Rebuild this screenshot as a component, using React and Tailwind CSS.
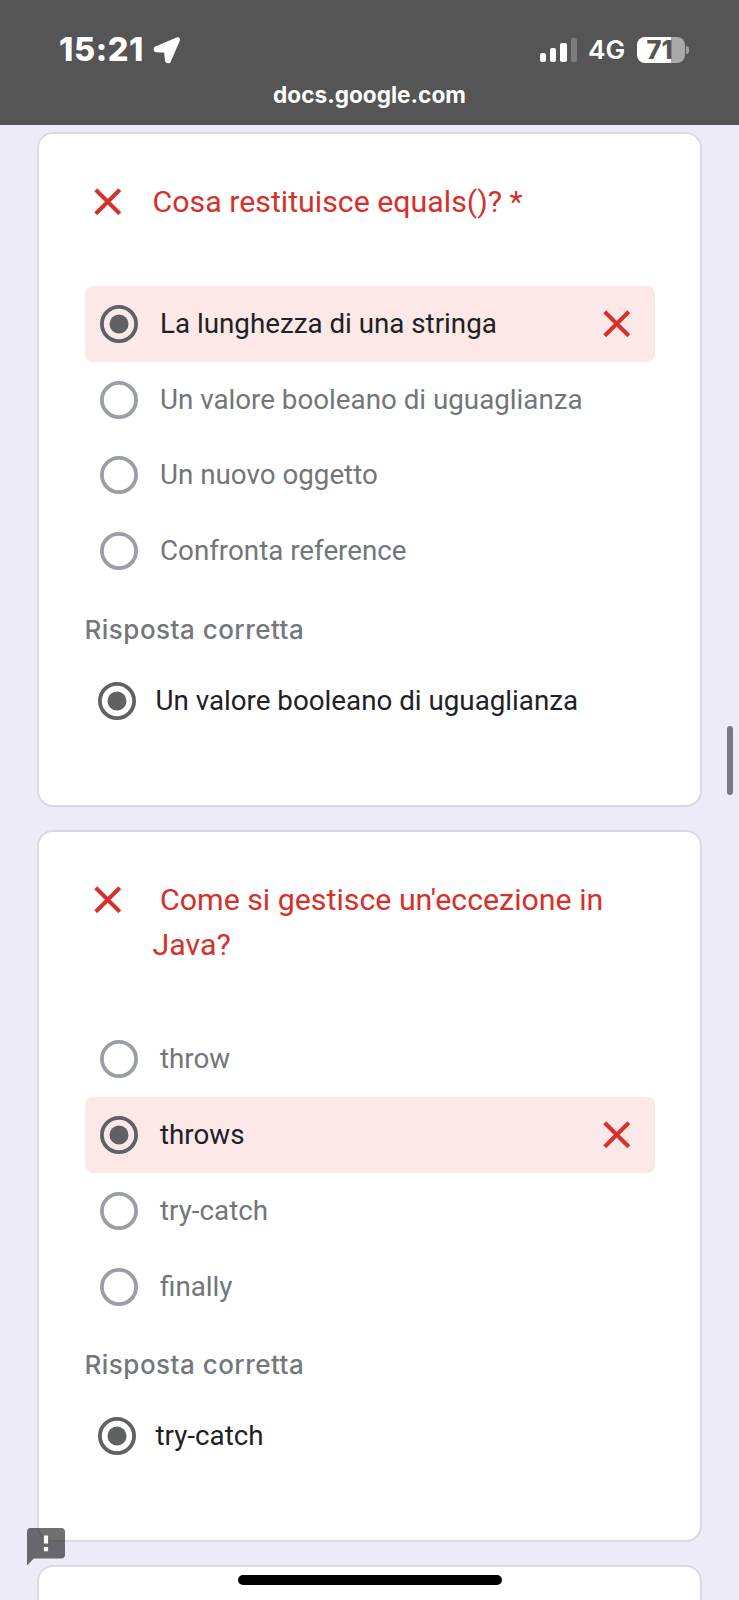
const questions = [
  {
    title: "Cosa restituisce equals()? *",
    head: "h-[107px]",
    card: "h-[675px]",
    options: [
      "La lunghezza di una stringa",
      "Un valore booleano di uguaglianza",
      "Un nuovo oggetto",
      "Confronta reference",
    ],
    selected: 0,
    correct: "Un valore booleano di uguaglianza",
  },
  {
    title: " Come si gestisce un'eccezione in Java?",
    head: "h-[144.3px]",
    card: "h-[712px]",
    options: ["throw", "throws", "try-catch", "finally"],
    selected: 1,
    correct: "try-catch",
  },
];

function CrossIcon() {
  return (
    <svg viewBox="0 0 24 24" className="size-[45.5px] shrink-0" fill="#d6302a" stroke="#d6302a" strokeWidth="0.2">
      <path d="M19 6.41 17.59 5 12 10.59 6.41 5 5 6.41 10.59 12 5 17.59 6.41 19 12 13.41 17.59 19 19 17.59 13.41 12z" />
    </svg>
  );
}

function Radio({ checked }) {
  const color = checked ? "#5f6165" : "#9a9fa5";
  return (
    <svg viewBox="0 0 38 38" className="size-[38px] shrink-0">
      <circle cx="19" cy="19" r="17.1" fill="none" stroke={color} strokeWidth="3.8" />
      {checked && <circle cx="19" cy="19" r="9.5" fill={color} />}
    </svg>
  );
}

function Option({ label, selected }) {
  return (
    <div
      className={
        "flex h-[75.8px] items-center rounded-lg px-[15px] " + (selected ? "bg-[#fbe8e7]" : "")
      }
    >
      <Radio checked={selected} />
      <span
        className={
          "ml-[22.5px] flex-1 whitespace-nowrap text-[27.75px] leading-[42px] " +
          (selected ? "text-[#202124]" : "text-[#72767a]")
        }
      >
        {label}
      </span>
      {selected && <CrossIcon />}
    </div>
  );
}

function Question({ q }) {
  return (
    <section
      className={
        "shrink-0 rounded-2xl border-2 border-[#dad8e2] bg-white pl-[45.5px] pr-[45.5px] pt-[45px] " +
        q.card
      }
    >
      <div className={"flex " + q.head}>
        <CrossIcon />
        <h2 className="ml-[22.5px] flex-1 whitespace-pre-wrap text-[30.32px] leading-[45px] text-[#d6302a]">
          {q.title}
        </h2>
      </div>
      {q.options.map((o, i) => (
        <Option key={o} label={o} selected={i === q.selected} />
      ))}
      <p className="mt-[20.5px] font-[Inter,sans-serif] text-[26px] font-medium leading-10 tracking-[0.48px] text-[#74777b]">
        Risposta corretta
      </p>
      <div className="mt-[13.5px] flex h-[76px] items-center pl-[13px]">
        <Radio checked />
        <span className="ml-5 whitespace-nowrap text-[27.75px] leading-[42px] text-[#202124]">
          {q.correct}
        </span>
      </div>
    </section>
  );
}

function StatusBar() {
  return (
    <header className="h-[125px] shrink-0 bg-[#555555] pt-[34px] font-[Inter,sans-serif] text-white">
      <div className="flex h-8 items-center justify-between pl-[59px] pr-[50px]">
        <div className="flex items-center">
          <span className="w-[94px] text-[32.5px] font-extrabold leading-8 tracking-[0.6px]">15:21</span>
          <svg viewBox="0 0 28 28" className="size-7" fill="#fff" stroke="#fff" strokeWidth="4.4" strokeLinejoin="round">
            <path d="M25 3.4 L2.8 12.8 L3 14 L13.2 14.6 L14.2 24.8 L15.6 25 Z" />
          </svg>
        </div>
        <div className="flex items-center">
          <div className="flex h-6 items-end gap-[3.8px]">
            <span className="h-[9px] w-[6.5px] rounded-[2px] bg-white" />
            <span className="h-[14px] w-[6.5px] rounded-[2px] bg-white" />
            <span className="h-[19px] w-[6.5px] rounded-[2px] bg-white" />
            <span className="h-6 w-[6.5px] rounded-[2px] bg-[#7c7c7c]" />
          </div>
          <span className="ml-[11px] w-[37px] text-[26.3px] font-semibold leading-8">4G</span>
          <div className="ml-[12px] flex h-[26px] w-[48px] items-center rounded-[8px] bg-[linear-gradient(to_right,#ffffff_34px,#a9a9a9_34px)] pl-[9.5px]">
            <span className="text-[25.5px] font-extrabold leading-8 text-[#555555]">71</span>
          </div>
          <span className="ml-px h-2 w-[3px] rounded-r-full bg-[#a0a0a0]" />
        </div>
      </div>
      <p className="mt-[13px] text-center text-[22.6px] font-bold leading-8">docs.google.com</p>
    </header>
  );
}

export default function App() {
  return (
    <div className="relative flex h-[1600px] w-[739px] flex-col overflow-hidden bg-[#eeebf8] font-[Roboto,sans-serif]">
      <StatusBar />
      <main className="flex flex-1 flex-col gap-[23px] overflow-hidden pl-[37px] pr-[37px] pt-[7px]">
        {questions.map((q) => (
          <Question key={q.title} q={q} />
        ))}
        <section className="h-[120px] shrink-0 rounded-2xl border-2 border-[#dad8e2] bg-white" />
      </main>

      <div className="absolute left-[727px] top-[726px] h-[69px] w-[6px] rounded-full bg-[#7b7884]" />
      <svg viewBox="2 2 20 20" className="absolute left-[26.5px] top-[1528px] size-[38px]">
        <path
          d="M20.3 2H3.7C2.8 2 2 2.8 2 3.7v18L5.6 18h14.7c.9 0 1.7-.8 1.7-1.7V3.7c0-.9-.8-1.7-1.7-1.7z"
          fill="#000"
          fillOpacity=".56"
        />
        <path d="M10.9 6h2.2v4.2h-2.2zM10.9 12h2.2v2.2h-2.2z" fill="#fff" />
      </svg>
      <div className="absolute left-[238px] top-[1575px] h-[10px] w-[263.5px] rounded-full bg-black" />
    </div>
  );
}
